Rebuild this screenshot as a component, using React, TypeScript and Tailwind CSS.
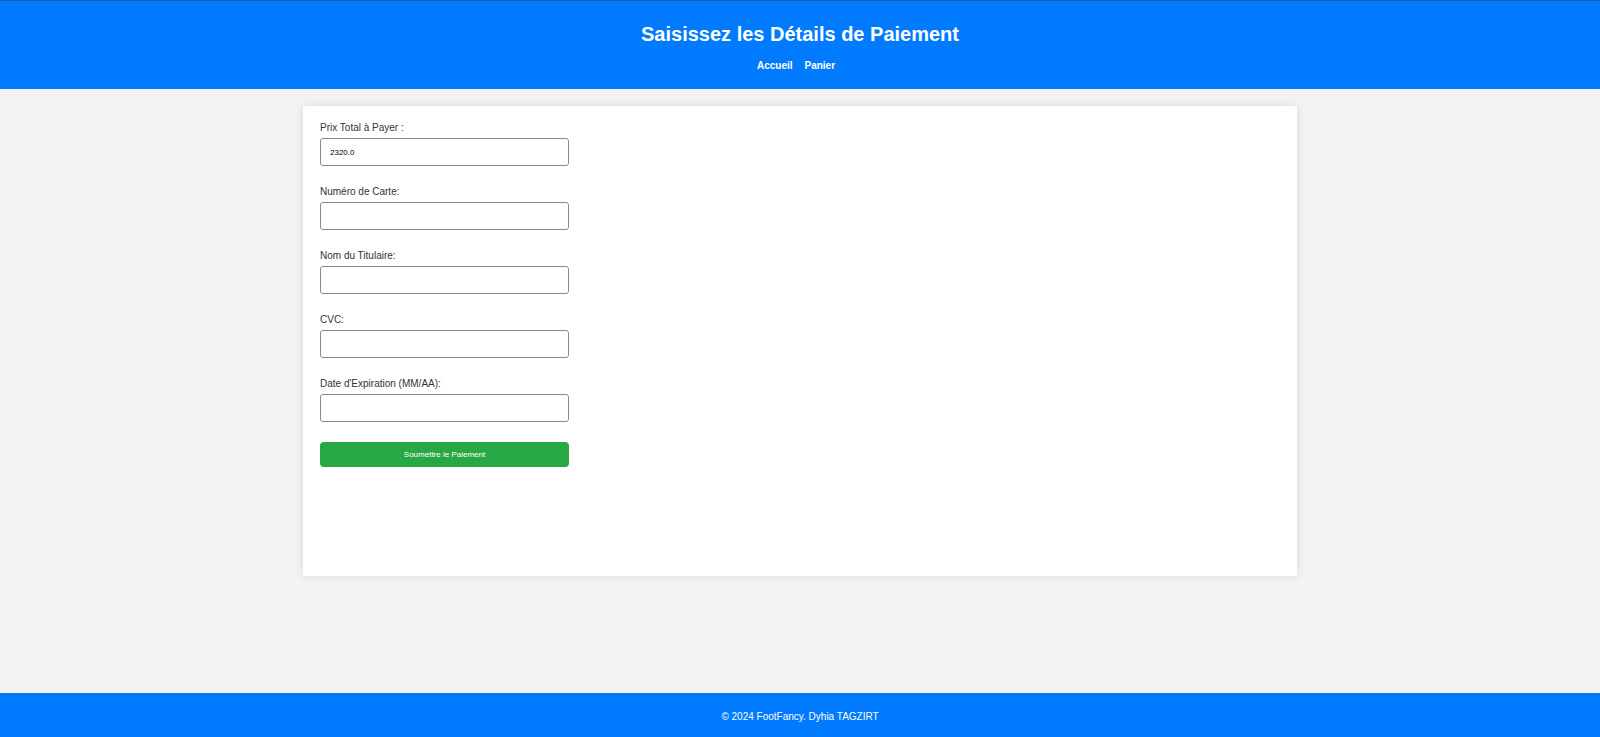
import { useState } from 'react';

const fields = [
  { id: 'total', label: 'Prix Total à Payer :', value: '2320.0' },
  { id: 'card', label: 'Numéro de Carte:', value: '' },
  { id: 'holder', label: 'Nom du Titulaire:', value: '' },
  { id: 'cvc', label: 'CVC:', value: '' },
  { id: 'expiry', label: "Date d'Expiration (MM/AA):", value: '' },
];

export default function App() {
  const [values, setValues] = useState<Record<string, string>>(
    Object.fromEntries(fields.map((f) => [f.id, f.value]))
  );

  return (
    <div className="min-h-screen flex flex-col bg-[#f3f3f3] font-['Liberation_Sans',Arial,sans-serif]">
      {/* Header */}
      <header className="bg-[#007bff] border-t border-[#2559a0] pt-[22px] pb-[17px] text-center text-white">
        <h1 className="text-[20px] leading-[23px] font-bold">Saisissez les Détails de Paiement</h1>
        <nav className="mt-[14px] pr-[8px] flex justify-center gap-[12px] text-[10px] leading-[12px] font-bold">
          <a href="#">Accueil</a>
          <a href="#">Panier</a>
        </nav>
      </header>

      {/* Main */}
      <main className="flex-1 pt-[17px]">
        <div className="mx-auto w-[994px] h-[470px] bg-white shadow-[0_0_10px_rgba(0,0,0,0.1)] px-[17px] pt-[16px]">
          <form className="w-[249px]" onSubmit={(e) => e.preventDefault()}>
            {fields.map((f) => (
              <div key={f.id} className="mb-[20px]">
                <label htmlFor={f.id} className="block text-[10px] leading-[12px] text-[#333] mb-[4px]">
                  {f.label}
                </label>
                <input
                  id={f.id}
                  type="text"
                  value={values[f.id]}
                  readOnly={f.id === 'total'}
                  onChange={(e) => setValues({ ...values, [f.id]: e.target.value })}
                  className="block w-full h-[28px] px-[9px] border border-[#8a8a8a] rounded-[3px] text-[8px] text-black bg-white outline-none"
                />
              </div>
            ))}
            <button
              type="submit"
              className="block w-full h-[25px] mt-[2px] rounded-[4px] bg-[#28a745] text-white text-[8px]"
            >
              Soumettre le Paiement
            </button>
          </form>
        </div>
      </main>

      {/* Footer */}
      <footer className="bg-[#007bff] h-[44px] pt-[2px] flex items-center justify-center text-white text-[10px]">
        © 2024 FootFancy. Dyhia TAGZIRT
      </footer>
    </div>
  );
}
